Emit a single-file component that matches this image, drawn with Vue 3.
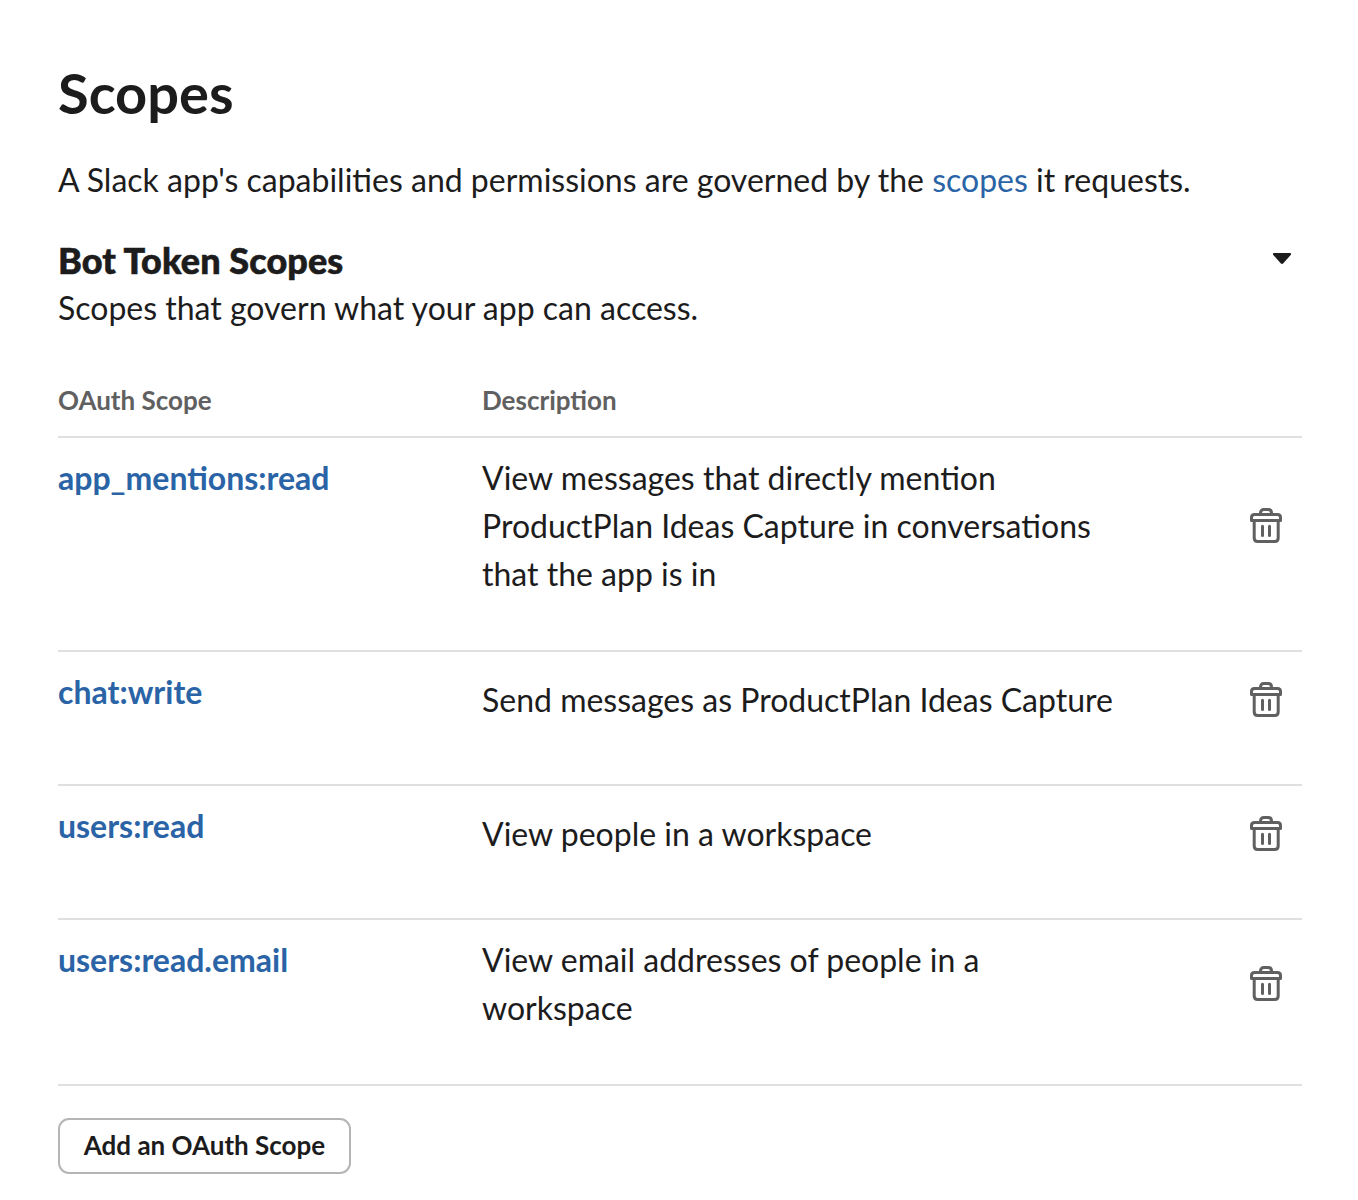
<script setup>
const scopes = [
  { name: 'app_mentions:read', lines: ['View messages that directly mention', 'ProductPlan Ideas Capture in conversations', 'that the app is in'], size: 'tall' },
  { name: 'chat:write', lines: ['Send messages as ProductPlan Ideas Capture'], size: 'single' },
  { name: 'users:read', lines: ['View people in a workspace'], size: 'single' },
  { name: 'users:read.email', lines: ['View email addresses of people in a', 'workspace'], size: 'double' },
]
</script>

<template>
  <main class="page">
    <h1>Scopes</h1>
    <p class="intro">A Slack app's capabilities and permissions are governed by the <a>scopes</a> it requests.</p>
    <header class="section">
      <div>
        <h2>Bot Token Scopes</h2>
        <p class="sub">Scopes that govern what your app can access.</p>
      </div>
      <svg class="caret" width="20" height="14" viewBox="0 0 20 14"><path d="M2 1h16q1.500 0 .9 1.700L11.300 11.300q-1.300 1.400-2.600 0L1.100 2.700Q.5 1 2 1z" fill="#1d1c1d" /></svg>
    </header>
    <div class="head"><span class="name">OAuth Scope</span><span>Description</span></div>
    <div v-for="s in scopes" :key="s.name" class="row" :class="s.size">
      <a class="name">{{ s.name }}</a>
      <div class="desc"><div v-for="l in s.lines" :key="l">{{ l }}</div></div>
      <svg class="trash" width="32" height="36" viewBox="0 0 32 36" fill="none" stroke="#616061" stroke-width="3" stroke-linecap="round">
        <path d="M10.500 6V5q0-3.400 3.400-3.400h4.200q3.400 0 3.400 3.400v1" />
        <path d="M4.500 6.400h23q3 0 3 3v3.100h-29v-3.100q0-3 3-3z" stroke-linejoin="round" />
        <path d="M4.200 13v17q0 3.500 3.500 3.500h17q3.500 0 3.500-3.500V13M12.500 18.300v9.200M19.500 18.300v9.200" />
      </svg>
    </div>
    <button>Add an OAuth Scope</button>
  </main>
</template>

<style>
body { background: #fff; }
</style>
<style scoped>
.page { box-sizing: border-box; height: 1200px; padding: 56px 56px 0 58px; font: 32px/48px Lato, sans-serif; color: #1d1c1d; }
h1 { margin: 0; font-size: 56px; line-height: 74px; font-weight: 700; }
p { margin: 0; white-space: nowrap; }
.intro { margin-top: 26px; }
a { color: #2a64a6; }
.section { display: flex; justify-content: space-between; margin-top: 32px; }
h2 { margin: 0; font-family: "Lato Black", Lato, sans-serif; font-size: 36px; line-height: 48px; font-weight: 900; letter-spacing: .1px; -webkit-text-stroke: .6px #1d1c1d; }
.caret { margin: 16px 10px 0 0; }
.head { display: flex; height: 66px; margin-top: 38px; border-bottom: 2px solid #e0e0e0; font-size: 26px; line-height: 60px; font-weight: 700; color: #616061; }
.name { width: 424px; flex: none; }
.row { display: flex; box-sizing: border-box; height: 134px; padding-top: 16px; border-bottom: 2px solid #e0e0e0; }
.row .name { font-weight: 700; }
.desc { flex: 1; white-space: nowrap; }
.trash { margin: 14px 20px 0 0; }
.single .desc { padding-top: 8px; }
.tall { height: 214px; }
.tall .trash { margin-top: 54px; }
.double { height: 166px; }
.double .trash { margin-top: 30px; }
button { display: block; width: 293px; height: 56px; margin-top: 32px; padding: 0 0 1px; border: 2px solid #b5b5b5; border-radius: 11px; background: #fff; color: #1d1c1d; font: 700 26px/51px Lato, sans-serif; }
</style>
